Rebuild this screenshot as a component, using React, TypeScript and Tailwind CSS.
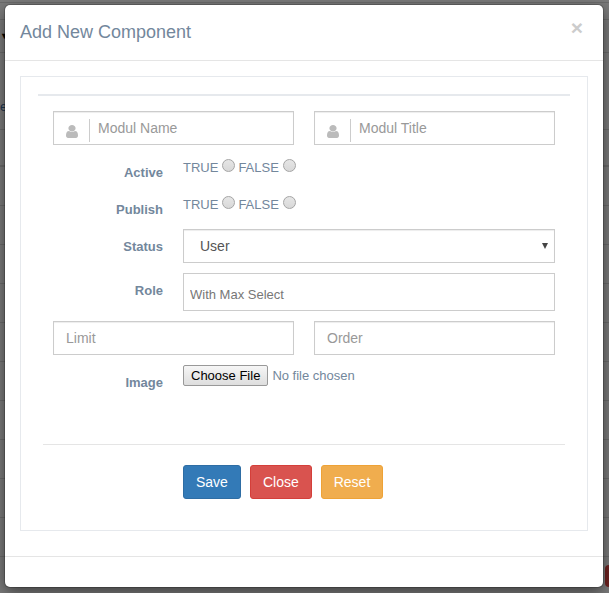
import React, { useState } from "react";

const inputBox =
  "h-[34px] border border-[#ccc] bg-white text-sm text-[#555] shadow-[inset_0_1px_1px_rgba(0,0,0,0.075)]";

function UserIcon() {
  return (
    <svg viewBox="0 128 1280 1536" preserveAspectRatio="none" className="mt-1.5 ml-3 h-[13px] w-3 shrink-0 fill-[#bbb]" aria-hidden="true">
      <path d="M1280 1399q0 109-62.5 187t-150.5 78h-854q-88 0-150.5-78t-62.5-187q0-85 8.5-160.5t31.5-152 58.5-131 94-89 134.5-34.5q131 128 313 128t313-128q76 0 134.500 34.500t94 89 58.500 131 31.500 152 8.500 160.500zM1024 512q0 159-112.500 271.500t-271.500 112.500-271.500-112.500-112.500-271.500 112.500-271.500 271.500-112.500 271.500 112.500 112.500 271.500z" />
    </svg>
  );
}

function IconInput({ label }: { label: string }) {
  return (
    <label className={`${inputBox} flex min-w-0 items-center`}>
      <UserIcon />
      <span className="mt-1 ml-[11px] h-[23px] w-px shrink-0 bg-[#ccc]" />
      <input
        type="text"
        aria-label={label}
        placeholder={label}
        className="h-full min-w-0 flex-1 bg-transparent px-2 outline-none placeholder:text-[#999]"
      />
    </label>
  );
}

function Row({ label, id, children }: { label: string; id?: string; children: React.ReactNode }) {
  const text = "w-[110px] shrink-0 pt-2 text-right leading-[19px] font-bold";
  return (
    <div className="flex gap-5">
      {id ? (
        <label htmlFor={id} className={text}>{label}</label>
      ) : (
        <span className={text}>{label}</span>
      )}
      <div className="min-w-0 flex-1">{children}</div>
    </div>
  );
}

function RadioPair({ name }: { name: string }) {
  return (
    <div role="radiogroup" aria-label={name} className="flex gap-[3px] pt-[3px]">
      {["TRUE", "FALSE"].map((value) => (
        <label key={value} className="flex gap-1">
          {value}
          <input
            type="radio"
            name={name}
            value={value}
            className="mt-px size-[13px] appearance-none rounded-full border border-[#a5a5a5] bg-linear-to-b from-[#e6e6e6] to-[#d8d8d8] checked:border-4 checked:border-[#777]"
          />
        </label>
      ))}
    </div>
  );
}

function PageBehind() {
  return (
    <div className="absolute inset-0 overflow-hidden bg-[#7b7b7b]" aria-hidden="true">
      <div className="h-[3px] border-b border-[#6b6b6b]" />
      <div className="h-[17px] border-b border-[#6b6b6b]" />
      <div className="flex h-[33px] items-center border-b border-[#6b6b6b] text-[9px] text-black">▼</div>
      <div className="flex h-[77px] items-end border-b border-[#6b6b6b] pb-3 text-[13px] text-[#1d3550]">e</div>
      <div className="h-[37px] border-b-2 border-[#6b6b6b]" />
      {Array.from({ length: 10 }, (_, i) => (
        <div key={i} className="h-[39px] border-b border-[#6b6b6b]" />
      ))}
      <div className="flex justify-end pt-2">
        <div className="h-[22px] w-1 rounded-l bg-[#6e2220]" />
      </div>
    </div>
  );
}

export default function App() {
  const [open, setOpen] = useState(true);
  return (
    <div className="relative isolate min-h-screen font-['Liberation_Sans',Arial,sans-serif] text-[13px] leading-5 text-[#73879c]">
      <PageBehind />
      {open && (
        <div className="relative pt-[5px] pr-[6px] pb-[6px] pl-[5px]">
          <div
            role="dialog"
            aria-labelledby="title"
            className="rounded-[5px] bg-white shadow-[0_0_0_1px_rgba(0,0,0,0.2),0_5px_15px_rgba(0,0,0,0.5)]"
          >
            <header className="flex h-14 items-start justify-between border-b border-[#e5e5e5] px-[15px] pt-[15px]">
              <h4 id="title" className="text-lg leading-6">Add New Component</h4>
              <button
                type="button"
                aria-label="Dismiss"
                onClick={() => setOpen(false)}
                className="mr-[5px] text-[21px] leading-4 font-bold text-[#ccc]"
              >
                ×
              </button>
            </header>
            <div className="px-[15px] pt-[15px] pb-[25px]">
              <div className="border border-[#e6e9ed] p-[17px]">
                <div className="h-0.5 bg-[#e6e9ed]" />
                <form className="pt-[15px] pb-3.5" onSubmit={(e) => e.preventDefault()}>
                  <div className="flex flex-col gap-2.5 px-[15px]">
                    <div className="grid grid-cols-2 gap-5">
                      <IconInput label="Modul Name" />
                      <IconInput label="Modul Title" />
                    </div>
                    <Row label="Active">
                      <RadioPair name="Active" />
                    </Row>
                    <Row label="Publish">
                      <RadioPair name="Publish" />
                    </Row>
                    <Row label="Status" id="status">
                      <div className="relative">
                        <select id="status" className={`${inputBox} block w-full appearance-none px-4`}>
                          <option>User</option>
                          <option>Admin</option>
                        </select>
                        <svg viewBox="0 0 6 6" className="pointer-events-none absolute top-3.5 right-[7px] size-1.5 fill-[#444]" aria-hidden="true">
                          <path d="M0 0H6L3 6Z" />
                        </svg>
                      </div>
                    </Row>
                    <Row label="Role" id="role">
                      <input
                        id="role"
                        type="text"
                        placeholder="With Max Select"
                        className="block h-[38px] w-full border border-[#ccc] px-1.5 pt-1 outline-none placeholder:text-[#777]"
                      />
                    </Row>
                    <div className="grid grid-cols-2 gap-5">
                      <input type="number" aria-label="Limit" placeholder="Limit" className={`${inputBox} min-w-0 px-3 placeholder:text-[#999]`} />
                      <input type="number" aria-label="Order" placeholder="Order" className={`${inputBox} min-w-0 px-3 placeholder:text-[#999]`} />
                    </div>
                    <Row label="Image" id="image">
                      <input
                        id="image"
                        type="file"
                        className="block h-[21px] w-full leading-[19px] file:mr-1 file:h-[21px] file:rounded-xs file:border file:border-solid file:border-[#999] file:bg-linear-to-b file:from-[#f6f6f6] file:to-[#dedede] file:px-[7px] file:text-black"
                      />
                    </Row>
                  </div>
                  <hr className="mx-[5px] mt-[52px] mb-5 border-[#e5e5e5]" />
                  <div className="flex gap-[9px] pr-[15px] pl-[145px] text-sm text-white">
                    <button type="submit" className="h-[34px] rounded-[3px] border border-[#2e6da4] bg-[#337ab7] px-3">Save</button>
                    <button type="button" onClick={() => setOpen(false)} className="h-[34px] rounded-[3px] border border-[#d43f3a] bg-[#d9534f] px-3">Close</button>
                    <button type="reset" className="h-[34px] rounded-[3px] border border-[#eea236] bg-[#f0ad4e] px-3">Reset</button>
                  </div>
                </form>
              </div>
            </div>
            <footer className="border-t border-[#e5e5e5] p-[15px]" />
          </div>
        </div>
      )}
    </div>
  );
}
